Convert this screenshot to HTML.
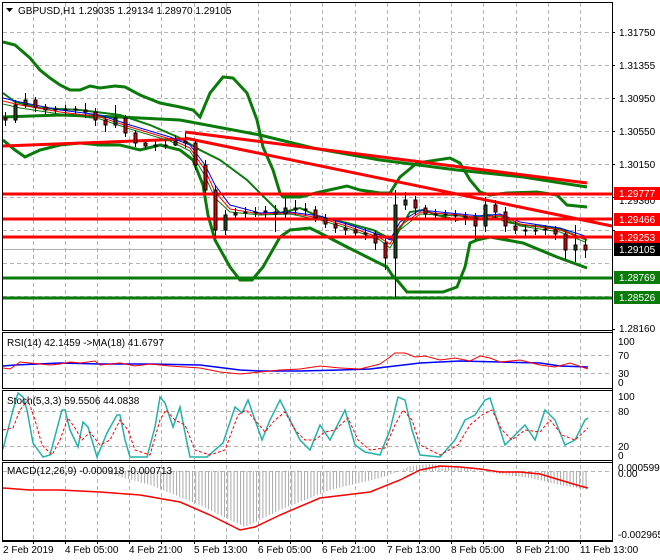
<!DOCTYPE html>
<html><head><meta charset="utf-8"><style>
html,body{margin:0;padding:0;background:#fff;}
svg{display:block;font-family:"Liberation Sans",sans-serif;font-size:10px;}
</style></head><body>
<svg width="660" height="560" viewBox="0 0 660 560" xmlns="http://www.w3.org/2000/svg">
<defs>
<pattern id="hist" width="3.2" height="10" patternUnits="userSpaceOnUse"><rect x="0" y="0" width="1" height="10" fill="#a8a8a8"/></pattern>
<clipPath id="cm"><rect x="3" y="3" width="609" height="327"/></clipPath>
</defs>
<rect width="660" height="560" fill="#fff"/>
<!-- grids -->
<g stroke="#b4b4b4" stroke-dasharray="4,3" stroke-width="1">
<path d="M33.5 3V540M65.5 3V540M97.5 3V540M129.5 3V540M161.5 3V540M194.5 3V540M226.5 3V540M258.5 3V540M290.5 3V540M322.5 3V540M355.5 3V540M387.5 3V540M419.5 3V540M451.5 3V540M483.5 3V540M516.5 3V540M548.5 3V540M580.5 3V540"/>
<path d="M3 32.5H612M3 65.5H612M3 98.5H612M3 131.5H612M3 164.5H612M3 197.5H612M3 230.5H612M3 263.5H612M3 296.5H612"/>
<path d="M3 355.5H612M3 373.5H612M3 411.5H612M3 446.5H612M3 471.5H612"/>
</g>
<!-- main chart -->
<g clip-path="url(#cm)" fill="none">
<path d="M3 249.5H612" stroke="#b0b0b0"/>
<!-- long MA -->
<path d="M3 117 L60 115 L120 117 L180 120 L260 135 L313 148 L380 160 L457 170 L523 177 L587 187" stroke="#0a7a0a" stroke-width="3"/>
<!-- bollinger upper -->
<path d="M3 42 L15 45 L30 58 L40 70 L50 78 L60 85 L70 90 L80 90 L90 86 L100 88 L115 86 L125 87 L140 95 L160 103 L180 107 L193 110 L200 117 L210 93 L223 77 L233 78 L247 93 L257 120 L263 147 L273 170 L280 193 L283 197 L300 197 L320 192 L347 186 L360 190 L380 193 L390 193 L400 177 L417 163 L450 158 L460 163 L470 180 L480 192 L490 195 L507 193 L537 192 L557 195 L567 205 L587 207" stroke="#0a7a0a" stroke-width="3"/>
<!-- bollinger middle -->
<path d="M3 93 L15 102 L40 108 L80 110 L120 115 L150 125 L180 138 L200 150 L220 160 L247 180 L267 200 L280 213 L300 208 L320 217 L347 223 L373 230 L393 240 L410 212 L423 210 L437 215 L457 220 L473 217 L490 215 L507 222 L523 225 L557 228 L587 240" stroke="#0a7a0a" stroke-width="2"/>
<!-- bollinger lower -->
<path d="M3 140 L15 150 L25 157 L40 150 L60 145 L80 143 L100 145 L120 145 L140 150 L160 145 L180 150 L193 160 L203 185 L208 215 L215 240 L230 267 L240 280 L252 280 L263 267 L280 237 L290 230 L310 228 L320 233 L347 247 L367 257 L387 267 L392 275 L397 280 L407 292 L443 292 L457 287 L465 267 L470 243 L477 240 L490 237 L523 243 L557 257 L587 268" stroke="#0a7a0a" stroke-width="3"/>
<!-- red trendlines -->
<path d="M3 146 L185 139" stroke="#f00" stroke-width="3"/>
<path d="M185 132 L587 183" stroke="#f00" stroke-width="3"/>
<path d="M185 138 L612 226" stroke="#f00" stroke-width="3"/>
<!-- small MAs -->
<path d="M3 98 L20 102 L60 110 L100 115 L130 125 L170 137 L190 145 L205 165 L215 185 L230 205 L260 213 L290 212 L320 216 L350 225 L380 235 L390 240 L400 222 L420 210 L460 214 L480 216 L500 214 L520 222 L560 228 L585 236" stroke="#00f" stroke-width="1"/>
<path d="M3 101 L20 105 L60 112 L100 117 L130 127 L170 139 L190 148 L205 170 L215 192 L230 209 L260 214 L290 213 L320 218 L350 227 L380 238 L390 244 L400 226 L420 212 L460 215 L480 218 L500 215 L520 224 L560 230 L585 239" stroke="#f00" stroke-width="1"/>
<path d="M3 104 L20 108 L60 114 L100 119 L130 129 L170 141 L190 151 L205 176 L215 198 L230 212 L260 215 L290 214 L320 220 L350 229 L380 240 L390 248 L400 230 L420 214 L460 216 L480 220 L500 216 L520 226 L560 232 L585 242" stroke="#0a7a0a" stroke-width="1"/>
<!-- horizontal levels -->
<path d="M3 194H612M3 219H612M3 237H612" stroke="#f00" stroke-width="3"/>
<path d="M3 278H612M3 298H612" stroke="#0a7a0a" stroke-width="3"/>
<!-- candles -->
<path stroke="#000" stroke-width="1" d="M5.5 112V126M15.5 100V123M25.5 93V108M35.5 97V112M45.5 104V115M55.5 106V114M65.5 105V116M75.5 106V114M85.5 103V118M95.5 108V126M105.5 117V132M115.5 105V128M125.5 115V137M135.5 130V147M145.5 140V150M155.5 141V151M165.5 140V149M175.5 135V146M185.5 133V148M195.5 140V170M205.5 160V195M215.5 185V238M225.5 210V235M235.5 208V220M245.5 207V218M255.5 207V217M265.5 206V218M275.5 205V232M285.5 198V218M295.5 200V215M305.5 203V216M315.5 206V222M325.5 214V228M335.5 220V233M345.5 222V235M355.5 226V237M365.5 228V240M375.5 230V250M385.5 238V270M395.5 190V298M405.5 192V210M415.5 196V215M425.5 205V218M435.5 209V220M445.5 210V220M455.5 210V222M465.5 212V225M475.5 213V240M485.5 197V232M495.5 200V218M505.5 207V232M515.5 221V234M525.5 225V236M535.5 224V235M545.5 225V235M555.5 226V240M565.5 230V260M575.5 225V262M585.5 240V258"/>
<g stroke="#000" stroke-width="1">
<g fill="#e00000">
<rect x="4" y="118" width="3" height="2"/><rect x="34" y="100" width="3" height="7"/><rect x="44" y="107" width="3" height="3"/><rect x="84" y="110" width="3" height="2"/><rect x="94" y="112" width="3" height="8"/><rect x="104" y="120" width="3" height="5"/><rect x="124" y="118" width="3" height="15"/><rect x="134" y="133" width="3" height="10"/><rect x="144" y="143" width="3" height="3"/><rect x="184" y="141" width="3" height="2"/><rect x="194" y="143" width="3" height="22"/><rect x="204" y="165" width="3" height="25"/><rect x="214" y="190" width="3" height="40"/><rect x="274" y="212" width="3" height="2"/><rect x="314" y="210" width="3" height="8"/><rect x="324" y="218" width="3" height="6"/><rect x="334" y="224" width="3" height="4"/><rect x="344" y="228" width="3" height="2"/><rect x="354" y="230" width="3" height="3"/><rect x="374" y="234" width="3" height="9"/><rect x="384" y="243" width="3" height="15"/><rect x="414" y="200" width="3" height="8"/><rect x="424" y="208" width="3" height="6"/><rect x="464" y="216" width="3" height="2"/><rect x="474" y="218" width="3" height="8"/><rect x="494" y="205" width="3" height="7"/><rect x="504" y="212" width="3" height="14"/><rect x="514" y="226" width="3" height="4"/><rect x="554" y="230" width="3" height="4"/><rect x="564" y="234" width="3" height="16"/><rect x="584" y="245" width="3" height="5"/>
</g>
<g fill="#1e4a1e">
<rect x="14" y="105" width="3" height="15"/><rect x="24" y="100" width="3" height="5"/><rect x="54" y="109" width="3" height="1"/><rect x="64" y="109" width="3" height="1"/><rect x="74" y="109" width="3" height="1"/><rect x="114" y="118" width="3" height="7"/><rect x="154" y="145" width="3" height="1"/><rect x="164" y="145" width="3" height="1"/><rect x="174" y="141" width="3" height="4"/><rect x="224" y="215" width="3" height="15"/><rect x="234" y="213" width="3" height="2"/><rect x="244" y="212" width="3" height="1"/><rect x="254" y="212" width="3" height="1"/><rect x="264" y="211" width="3" height="1"/><rect x="284" y="208" width="3" height="6"/><rect x="294" y="208" width="3" height="2"/><rect x="304" y="209" width="3" height="1"/><rect x="364" y="233" width="3" height="1"/><rect x="394" y="205" width="3" height="53"/><rect x="404" y="200" width="3" height="5"/><rect x="434" y="214" width="3" height="1"/><rect x="444" y="214" width="3" height="1"/><rect x="454" y="215" width="3" height="1"/><rect x="484" y="205" width="3" height="21"/><rect x="524" y="230" width="3" height="1"/><rect x="534" y="230" width="3" height="1"/><rect x="544" y="229" width="3" height="1"/><rect x="574" y="245" width="3" height="5"/>
</g>
</g>
</g>
<!-- RSI -->
<path d="M3 366 L15 365 L60 363 L100 364 L150 364 L200 365 L240 370 L260 371 L300 371 L340 370 L370 369 L395 366 L420 363 L460 361 L500 362 L540 363 L560 366 L588 367" fill="none" stroke="#00f" stroke-width="1.5"/>
<path d="M3 368 L10 369 L20 362 L30 363 L50 365 L60 364 L70 362 L80 363 L95 361 L100 365 L120 363 L135 366 L150 364 L170 366 L200 368 L220 372 L240 374 L260 372 L280 370 L300 369 L320 366 L340 368 L360 369 L380 364 L390 357 L395 353 L405 353 L415 357 L425 356 L440 360 L455 358 L470 361 L480 356 L490 358 L500 362 L520 360 L540 365 L555 367 L570 363 L588 369" fill="none" stroke="#f00" stroke-width="1"/>
<!-- Stoch -->
<path id="st" d="M3 449 L13 410 L18 393 L23 397 L27 410 L33 443 L43 457 L50 455 L62 410 L65 410 L70 430 L78 447 L83 422 L88 427 L97 457 L107 433 L117 415 L120 415 L125 440 L130 457 L147 457 L155 427 L160 397 L165 403 L173 427 L180 407 L187 443 L190 457 L207 457 L223 443 L235 407 L242 413 L248 400 L255 420 L262 440 L270 420 L280 400 L290 420 L300 440 L310 450 L320 425 L330 440 L340 420 L345 410 L355 445 L365 452 L380 455 L390 430 L398 397 L405 400 L412 430 L420 455 L440 457 L455 440 L465 420 L475 415 L485 400 L490 398 L497 420 L505 445 L515 435 L525 425 L535 440 L545 410 L555 420 L565 445 L575 440 L585 420 L588 418" fill="none" stroke="#20b2aa" stroke-width="1.5"/>
<path d="M3 430 L13 428 L20 410 L28 400 L35 420 L42 445 L52 455 L60 440 L68 418 L75 428 L82 440 L90 432 L100 445 L110 440 L120 420 L128 430 L135 450 L150 455 L160 420 L166 410 L175 420 L185 425 L195 450 L210 455 L225 450 L238 415 L246 410 L255 420 L265 432 L275 420 L285 412 L295 430 L305 440 L315 440 L325 432 L335 430 L348 418 L358 440 L370 450 L385 448 L395 425 L403 410 L412 420 L420 445 L440 455 L458 445 L470 425 L482 415 L492 410 L502 430 L512 440 L525 430 L540 432 L550 420 L562 435 L575 440 L588 428" fill="none" stroke="#f00" stroke-width="1" stroke-dasharray="3,2"/>
<!-- MACD -->
<polygon points="5,471 100,471 150,485 200,505 230,520 245,527 280,510 330,490 380,478 400,471 400,471 410,466 430,464 460,467 480,471 500,474 530,478 560,485 588,490 588,471" fill="url(#hist)"/>
<path d="M3 488 L30 490 L60 490 L100 492 L140 495 L180 502 L210 515 L240 530 L255 527 L280 515 L320 498 L370 492 L400 480 L420 470 L440 466 L460 467 L480 469 L500 472 L520 472 L540 474 L560 480 L580 486 L588 488" fill="none" stroke="#f00" stroke-width="1.5"/>
<!-- frames -->
<g fill="none" stroke="#000" stroke-width="1">
<rect x="2.5" y="2.5" width="610" height="328"/>
<rect x="2.5" y="332.5" width="610" height="56"/>
<rect x="2.5" y="390.5" width="610" height="70"/>
<rect x="2.5" y="462.5" width="610" height="78"/>
<path d="M612.5 2V542M2 541.5H613"/>
</g>
<!-- ticks -->
<path stroke="#000" d="M612 32.5h3M612 65.5h3M612 98.5h3M612 131.5h3M612 164.5h3M612 197.5h3M612 230.5h3M612 329.5h3M33.5 541v3M65.5 541v3M97.5 541v3M129.5 541v3M161.5 541v3M194.5 541v3M226.5 541v3M258.5 541v3M290.5 541v3M322.5 541v3M355.5 541v3M387.5 541v3M419.5 541v3M451.5 541v3M483.5 541v3M516.5 541v3M548.5 541v3M580.5 541v3"/>
<!-- header -->
<path d="M6 8h7l-3.5 4z" fill="#000"/>
<text x="18" y="14" fill="#000">GBPUSD,H1  1.29035 1.29134 1.28970 1.29105</text>
<text x="7" y="346" fill="#000">RSI(14) 42.1459  -&gt;MA(18) 41.6797</text>
<text x="7" y="404" fill="#000">Stoch(5,3,3) 59.5506 44.0838</text>
<text x="7" y="474" fill="#000">MACD(12,26,9) -0.000918 -0.000713</text>
<!-- price axis -->
<g fill="#000">
<text x="619" y="36">1.31750</text>
<text x="619" y="69">1.31355</text>
<text x="619" y="102">1.30950</text>
<text x="619" y="135">1.30550</text>
<text x="619" y="168">1.30150</text>
<text x="619" y="204">1.29360</text>
<text x="619" y="239">1.28960</text>
<text x="619" y="332">1.28160</text>
</g>
<rect x="614" y="187" width="46" height="13" fill="#f00"/><text x="619" y="197" fill="#fff">1.29777</text>
<rect x="614" y="213" width="46" height="13" fill="#f00"/><text x="619" y="223" fill="#fff">1.29466</text>
<rect x="614" y="231" width="46" height="13" fill="#f00"/><text x="619" y="241" fill="#fff">1.29253</text>
<rect x="614" y="243" width="46" height="13" fill="#000"/><text x="619" y="253" fill="#fff">1.29105</text>
<rect x="614" y="271" width="46" height="13" fill="#0a7a0a"/><text x="619" y="281" fill="#fff">1.28769</text>
<rect x="614" y="291" width="46" height="13" fill="#0a7a0a"/><text x="619" y="301" fill="#fff">1.28526</text>
<g fill="#000">
<text x="618" y="345">100</text><text x="618" y="377">30</text><text x="618" y="386">0</text><text x="618" y="359">70</text>
<text x="618" y="400">100</text><text x="618" y="415">80</text><text x="618" y="450">20</text><text x="618" y="459">0</text>
<text x="618" y="471">0.000599</text><text x="618" y="477">0.00</text><text x="618" y="538">-0.002965</text>
</g>
<!-- time axis -->
<g fill="#000">
<text x="3" y="553">2 Feb 2019</text>
<text x="65" y="553">4 Feb 05:00</text>
<text x="129" y="553">4 Feb 21:00</text>
<text x="194" y="553">5 Feb 13:00</text>
<text x="258" y="553">6 Feb 05:00</text>
<text x="322" y="553">6 Feb 21:00</text>
<text x="387" y="553">7 Feb 13:00</text>
<text x="451" y="553">8 Feb 05:00</text>
<text x="516" y="553">8 Feb 21:00</text>
<text x="580" y="553">11 Feb 13:00</text>
</g>
</svg>
</body></html>
